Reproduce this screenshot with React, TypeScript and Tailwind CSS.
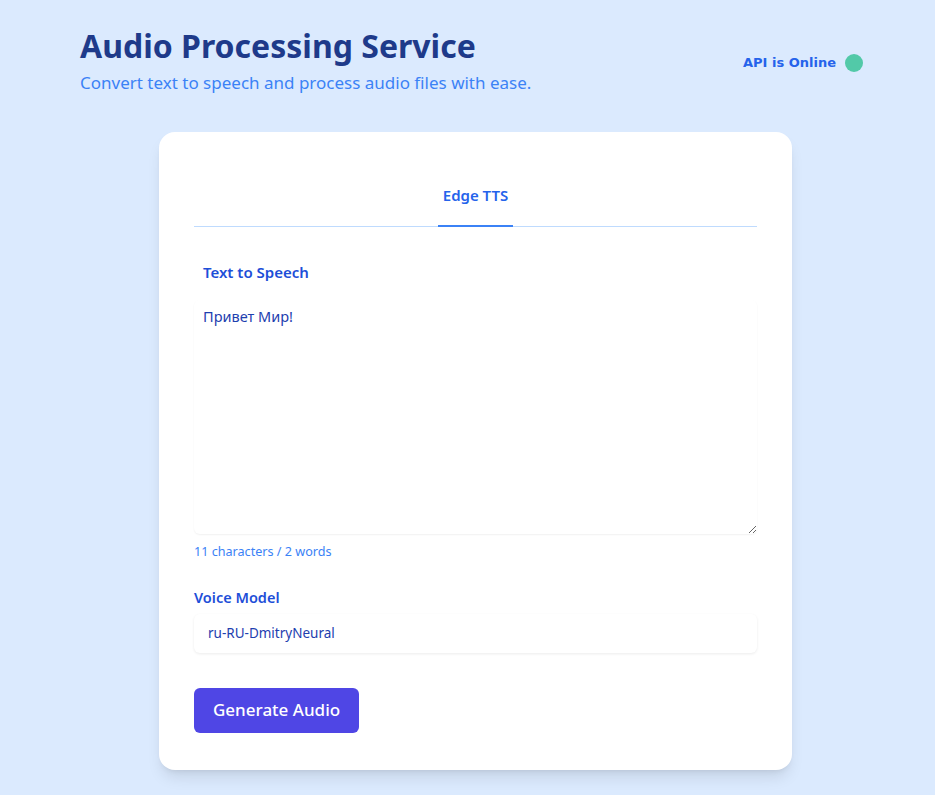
import React, { useState } from 'react';

const App: React.FC = () => {
  const [text, setText] = useState('Привет Мир!');
  const chars = text.length;
  const words = text.trim() ? text.trim().split(/\s+/).length : 0;

  return (
    <div className="min-h-screen bg-[#dbeafe] font-['Noto_Sans',sans-serif]">
      <header className="flex items-start justify-between px-[80px] pt-[25px]">
        <div>
          <h1 className="text-[32px] leading-[42px] font-bold text-[#1e3a8a]">Audio Processing Service</h1>
          <p className="mt-[4px] text-[17px] leading-6 text-[#3b82f6]">
            Convert text to speech and process audio files with ease.
          </p>
        </div>
        <div className="mt-[28px] mr-[-8px] flex items-center gap-[9px]">
          <span className="font-['DejaVu_Sans',sans-serif] text-[13px] font-bold text-[#2563eb]">API is Online</span>
          <span className="h-[18px] w-[18px] rounded-full bg-[#52c9a8]" />
        </div>
      </header>

      <main className="mt-[37px] flex justify-center pb-[26px] pl-[16px]">
        <div className="w-[633px] rounded-2xl bg-white px-[35px] pt-[35px] pb-[37px] shadow-lg">
          <div className="flex justify-center border-b border-[#bfdbfe]">
            <button className="-mb-px border-b-2 border-[#3b82f6] px-[5px] pt-[17px] pb-[18px] text-[15px] font-semibold text-[#2563eb]">
              Edge TTS
            </button>
          </div>

          <div className="mt-[34px]">
            <label className="block px-[9px] text-[15px] font-semibold text-[#1d4ed8]">Text to Speech</label>
            <textarea
              value={text}
              onChange={(e) => setText(e.target.value)}
              className="mt-[17px] block h-[234px] w-full rounded-md px-[9px] py-[6px] text-[14.5px] text-[#1e40af] shadow-[0_1px_2px_rgba(0,0,0,0.06)] outline-none"
            />
            <p className="mt-[9px] text-[12.6px] text-[#3b82f6]">
              {chars} characters / {words} words
            </p>
          </div>

          <div className="mt-[25px]">
            <label className="block text-[14.5px] font-semibold text-[#1d4ed8]">Voice Model</label>
            <select className="mt-[5px] block h-[39px] w-full appearance-none rounded-md bg-white px-[14px] text-[13.5px] text-[#1e40af] shadow-[0_1px_3px_rgba(0,0,0,0.08)] outline-none">
              <option>ru-RU-DmitryNeural</option>
            </select>
          </div>

          <button className="mt-[35px] h-[45px] rounded-md bg-[#4f46e5] px-[19px] text-[17px] font-medium text-white">
            Generate Audio
          </button>
        </div>
      </main>
    </div>
  );
};

export default App;
